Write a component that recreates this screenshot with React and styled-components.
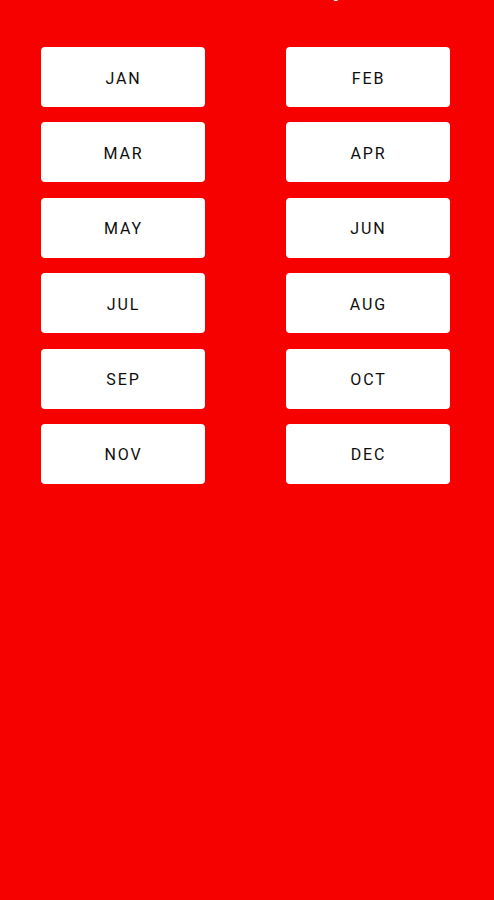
import React from 'react';
import styled, { createGlobalStyle } from 'styled-components';

const months = ['JAN', 'FEB', 'MAR', 'APR', 'MAY', 'JUN', 'JUL', 'AUG', 'SEP', 'OCT', 'NOV', 'DEC'];

const GlobalStyle = createGlobalStyle`
  html, body {
    margin: 0;
    padding: 0;
    background: #f60000;
    font-family: Roboto, "Liberation Sans", sans-serif;
  }
`;

const Screen = styled.div`
  min-height: 900px;
  background: #f60000;
  overflow: hidden;
`;

// title sits mostly above the visible area, only a descender peeks in
const Title = styled.h1`
  margin: -26px 0 0;
  height: 28px;
  text-align: center;
  color: #fff;
  font-size: 24px;
  font-weight: 500;
  line-height: 28px;
  padding-left: 184px;
`;

const MonthGrid = styled.div`
  display: grid;
  grid-template-columns: 164px 164px;
  column-gap: 81px;
  row-gap: 15.4px;
  padding: 45px 0 0 41px;
`;

const MonthButton = styled.button`
  height: 60px;
  border: none;
  border-radius: 4px;
  background: #ffffff;
  color: #0e0e0e;
  font-family: Roboto, "Liberation Sans", sans-serif;
  font-size: 16px;
  font-weight: 400;
  letter-spacing: 1.9px;
  cursor: pointer;
  padding: 2px 0 0 1px;
  &:active {
    background: #eee;
  }
`;

export default function App() {
  return (
    <Screen>
      <GlobalStyle />
      <Title>y</Title>
      <MonthGrid>
        {months.map((m) => (
          <MonthButton key={m}>{m}</MonthButton>
        ))}
      </MonthGrid>
    </Screen>
  );
}
